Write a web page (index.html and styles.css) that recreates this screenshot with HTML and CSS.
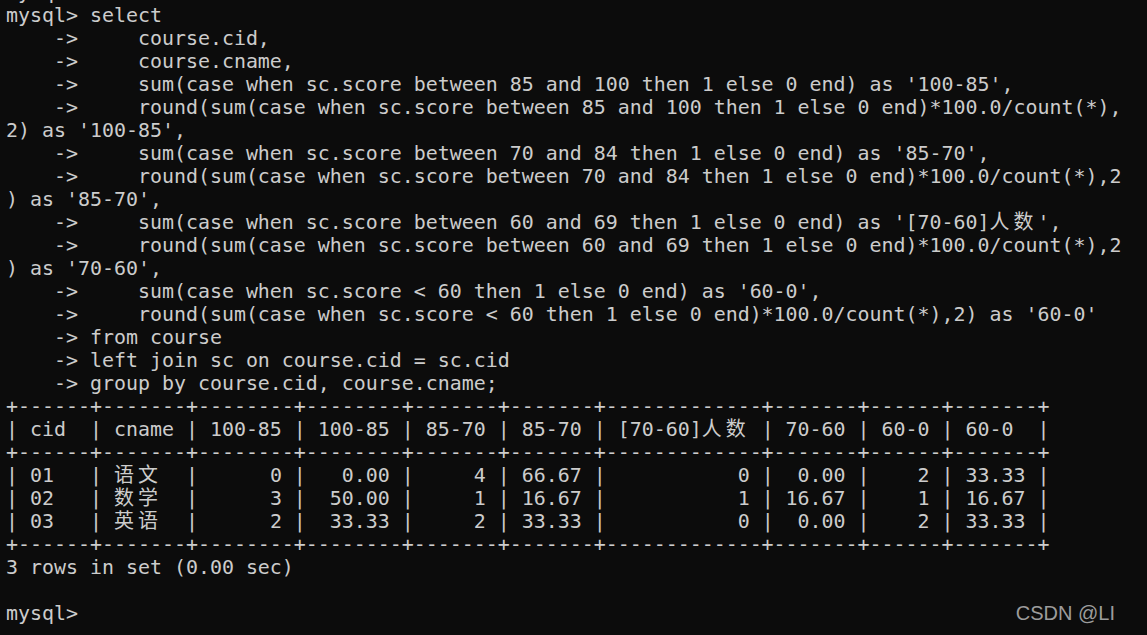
FILE: index.html
```html
<!DOCTYPE html>
<html lang="zh">
<head>
<meta charset="utf-8">
<title>mysql</title>
<link rel="stylesheet" href="styles.css">
</head>
<body>
<main class="term">
<pre class="out"><span class="prev">mysql&gt; </span>
mysql&gt; select
    -&gt;     course.cid,
    -&gt;     course.cname,
    -&gt;     sum(case when sc.score between 85 and 100 then 1 else 0 end) as '100-85',
    -&gt;     round(sum(case when sc.score between 85 and 100 then 1 else 0 end)*100.0/count(*),
2) as '100-85',
    -&gt;     sum(case when sc.score between 70 and 84 then 1 else 0 end) as '85-70',
    -&gt;     round(sum(case when sc.score between 70 and 84 then 1 else 0 end)*100.0/count(*),2
) as '85-70',
    -&gt;     sum(case when sc.score between 60 and 69 then 1 else 0 end) as '[70-60]<span class="cjk">人数</span>',
    -&gt;     round(sum(case when sc.score between 60 and 69 then 1 else 0 end)*100.0/count(*),2
) as '70-60',
    -&gt;     sum(case when sc.score &lt; 60 then 1 else 0 end) as '60-0',
    -&gt;     round(sum(case when sc.score &lt; 60 then 1 else 0 end)*100.0/count(*),2) as '60-0'
    -&gt; from course
    -&gt; left join sc on course.cid = sc.cid
    -&gt; group by course.cid, course.cname;
+------+-------+--------+--------+-------+-------+-------------+-------+------+-------+
| cid  | cname | 100-85 | 100-85 | 85-70 | 85-70 | [70-60]<span class="cjk">人数</span> | 70-60 | 60-0 | 60-0  |
+------+-------+--------+--------+-------+-------+-------------+-------+------+-------+
| 01   | <span class="cjk">语文</span>  |      0 |   0.00 |     4 | 66.67 |           0 |  0.00 |    2 | 33.33 |
| 02   | <span class="cjk">数学</span>  |      3 |  50.00 |     1 | 16.67 |           1 | 16.67 |    1 | 16.67 |
| 03   | <span class="cjk">英语</span>  |      2 |  33.33 |     2 | 33.33 |           0 |  0.00 |    2 | 33.33 |
+------+-------+--------+--------+-------+-------+-------------+-------+------+-------+
3 rows in set (0.00 sec)

mysql&gt; </pre>
<div class="mark">CSDN @LI</div>
</main>
</body>
</html>
```

FILE: styles.css
```css
html, body {
  margin: 0;
  padding: 0;
  background: #0c0c0c;
}
body {
  width: 1147px;
  height: 635px;
  overflow: hidden;
}
.term {
  position: relative;
  width: 1147px;
  height: 635px;
  overflow: hidden;
  background: #0c0c0c;
}
.out {
  margin: -19px 0 0 0;
  padding: 0 0 0 6px;
  font-family: "DejaVu Sans Mono", "Noto Sans CJK SC", monospace;
  font-size: 19.93px;
  line-height: 23px;
  color: #cccccc;
  white-space: pre;
}
.cjk {
  letter-spacing: 4.07px;
}
.mark {
  position: absolute;
  right: 32px;
  top: 602px;
  font-family: "Liberation Sans", Arial, sans-serif;
  font-size: 20px;
  color: #9c9c9c;
  line-height: 23px;
}
```
